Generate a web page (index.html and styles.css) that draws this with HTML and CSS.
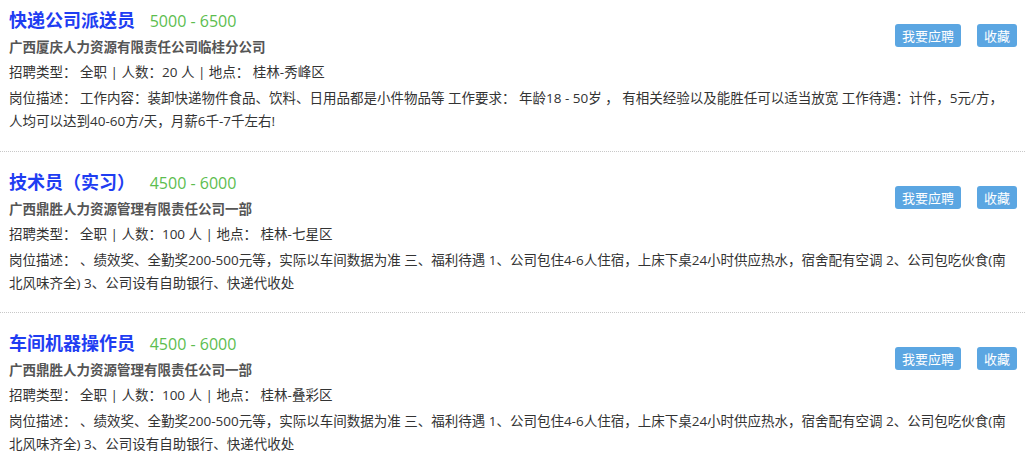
FILE: index.html
```html
<!DOCTYPE html>
<html lang="zh-CN">
<head>
    <meta charset="UTF-8">
    <meta name="viewport" content="width=device-width, initial-scale=1.0">
    <title>招聘信息</title>
    <link rel="stylesheet" href="styles.css">
</head>
<body>
    <div class="job-list">
        <div class="job">
            <div class="job-head">
                <div class="job-main">
                    <h3 class="job-title">快递公司派送员 <span class="salary">5000 - 6500</span></h3>
                    <div class="company">广西厦庆人力资源有限责任公司临桂分公司</div>
                    <div class="info">招聘类型： 全职 | 人数：20 人 | 地点： 桂林-秀峰区</div>
                </div>
                <div class="actions">
                    <button class="btn">我要应聘</button>
                    <button class="btn">收藏</button>
                </div>
            </div>
            <p class="desc">岗位描述： 工作内容：装卸快递物件食品、饮料、日用品都是小件物品等 工作要求： 年龄18 - 50岁 ， 有相关经验以及能胜任可以适当放宽 工作待遇：计件，5元/方，人均可以达到40-60方/天，月薪6千-7千左右!</p>
        </div>

        <div class="job">
            <div class="job-head">
                <div class="job-main">
                    <h3 class="job-title">技术员（实习） <span class="salary">4500 - 6000</span></h3>
                    <div class="company">广西鼎胜人力资源管理有限责任公司一部</div>
                    <div class="info">招聘类型： 全职 | 人数：100 人 | 地点： 桂林-七星区</div>
                </div>
                <div class="actions">
                    <button class="btn">我要应聘</button>
                    <button class="btn">收藏</button>
                </div>
            </div>
            <p class="desc">岗位描述： 、绩效奖、全勤奖200-500元等，实际以车间数据为准 三、福利待遇 1、公司包住4-6人住宿，上床下桌24小时供应热水，宿舍配有空调 2、公司包吃伙食(南北风味齐全) 3、公司设有自助银行、快递代收处</p>
        </div>

        <div class="job">
            <div class="job-head">
                <div class="job-main">
                    <h3 class="job-title">车间机器操作员 <span class="salary">4500 - 6000</span></h3>
                    <div class="company">广西鼎胜人力资源管理有限责任公司一部</div>
                    <div class="info">招聘类型： 全职 | 人数：100 人 | 地点： 桂林-叠彩区</div>
                </div>
                <div class="actions">
                    <button class="btn">我要应聘</button>
                    <button class="btn">收藏</button>
                </div>
            </div>
            <p class="desc">岗位描述： 、绩效奖、全勤奖200-500元等，实际以车间数据为准 三、福利待遇 1、公司包住4-6人住宿，上床下桌24小时供应热水，宿舍配有空调 2、公司包吃伙食(南北风味齐全) 3、公司设有自助银行、快递代收处</p>
        </div>
    </div>
</body>
</html>
```

FILE: styles.css
```css
body {
    margin: 0;
    background: #fff;
    font-family: "Open Sans", "Noto Sans CJK SC", sans-serif;
    font-size: 13.5px;
    color: #333;
}
.job {
    padding: 16px 9px 17px;
    border-bottom: 1px dotted #c8c8c8;
}
.job:first-child {
    padding-top: 6px;
    padding-bottom: 18px;
}
.job-head {
    display: flex;
    justify-content: space-between;
    align-items: flex-start;
}
.job-title {
    margin: 0;
    font-size: 18px;
    line-height: 28px;
    font-weight: bold;
    color: #1f3df2;
}
.salary {
    margin-left: 10px;
    font-size: 16px;
    font-weight: normal;
    color: #5cbd4f;
}
.company {
    font-weight: bold;
    color: #555;
    line-height: 24px;
}
.info {
    line-height: 26px;
}
.actions {
    display: flex;
    gap: 16px;
    margin-top: 18px;
    margin-right: -1px;
}
.btn {
    height: 23px;
    padding: 0 7px;
    border: none;
    border-radius: 3px;
    background-color: #5ba6e2;
    color: white;
    font-family: inherit;
    font-size: 13px;
    cursor: pointer;
}
.desc {
    margin: 2px 0 0;
    line-height: 23px;
}
```
